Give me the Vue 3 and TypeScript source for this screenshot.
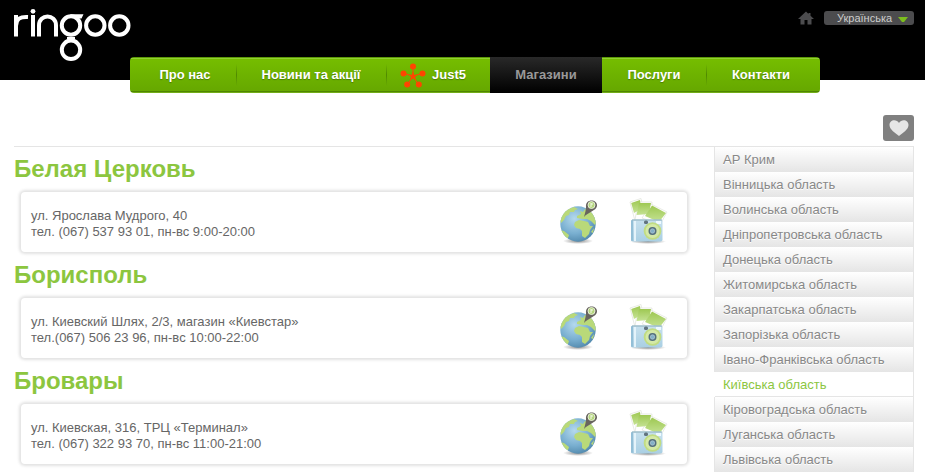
<script setup lang="ts">
import { ref } from 'vue'

interface Shop {
  city: string
  address: string
  contact: string
}

interface MenuItem {
  label: string
  star?: boolean
}

const menu: MenuItem[] = [
  { label: 'Про нас' },
  { label: 'Новини та акції' },
  { label: 'Just5', star: true },
  { label: 'Магазини' },
  { label: 'Послуги' },
  { label: 'Контакти' },
]

const shops: Shop[] = [
  { city: 'Белая Церковь', address: 'ул. Ярослава Мудрого, 40', contact: 'тел. (067) 537 93 01, пн-вс 9:00-20:00' },
  { city: 'Борисполь', address: 'ул. Киевский Шлях, 2/3, магазин «Киевстар»', contact: 'тел.(067) 506 23 96, пн-вс 10:00-22:00' },
  { city: 'Бровары', address: 'ул. Киевская, 316, ТРЦ «Терминал»', contact: 'тел. (067) 322 93 70, пн-вс 11:00-21:00' },
]

const regions: string[] = [
  'АР Крим',
  'Вінницька область',
  'Волинська область',
  'Дніпропетровська область',
  'Донецька область',
  'Житомирська область',
  'Закарпатська область',
  'Запорізька область',
  'Івано-Франківська область',
  'Київська область',
  'Кіровоградська область',
  'Луганська область',
  'Львівська область',
]

const activeMenu = ref('Магазини')
const activeRegion = ref('Київська область')
const language = ref('uk')
</script>

<template>
  <div class="page">
    <header class="header">
      <div class="top">
        <a class="logo" href="#" aria-label="ringoo">
          <svg width="118" height="54" viewBox="14 8 118 54" fill="none" stroke="#fff" stroke-width="4">
            <path d="M16 36.500V15M16 26C16 19 20 16.500 28 17" />
            <path d="M33 15V36.500" />
            <circle cx="33" cy="11.300" r="2.400" fill="#fff" stroke="none" />
            <path d="M39 36.500V25.500C39 13.500 56 13.500 56 25.500V36.500" />
            <circle cx="71" cy="25.500" r="9.200" />
            <path d="M70 14.300H83.500L81.500 18.500H74Z" fill="#fff" stroke="none" />
            <path d="M67 38H75" stroke-width="2" />
            <circle cx="71" cy="49.800" r="9.200" />
            <circle cx="95.300" cy="25.500" r="9.200" />
            <circle cx="119.300" cy="25.500" r="9.200" />
          </svg>
        </a>
        <div class="tools">
          <a class="home" href="#" aria-label="Головна">
            <svg width="16" height="14" viewBox="0 0 16 14" fill="#4c4c4e">
              <path d="M8 0.500 10.500 3V2H12.500V4.800L16 8H13.500V13.500H9.500V9H6.500V13.500H2.500V8H0Z" />
            </svg>
          </a>
          <div class="language">
            <select v-model="language" aria-label="Мова">
              <option value="uk">Українська</option>
            </select>
            <svg class="arrow" width="10" height="5" viewBox="0 0 10 5" aria-hidden="true">
              <path d="M0 0H10L6 5H4Z" fill="#7cbd1e" />
            </svg>
          </div>
        </div>
      </div>
      <nav class="menu">
        <a
          v-for="item in menu"
          :key="item.label"
          href="#"
          :class="{ active: item.label === activeMenu, starred: item.star }"
          @click.prevent="activeMenu = item.label"
        >
          <svg v-if="item.star" class="star" width="26" height="26" viewBox="0 0 26 26" fill="#ff4500" aria-hidden="true">
            <path d="M13 13V4M13 13 4 10.500M13 13 22 10.500M13 13 7.500 21.500M13 13 18.500 21.500" stroke="#ff4500" stroke-width="1" />
            <path d="M13 8.500 14.300 11.700 17.300 11.900 15 14 16 17.300 13 15.500 10 17.300 11 14 8.700 11.900 11.700 11.700Z" />
            <circle cx="13" cy="3.500" r="3" />
            <circle cx="3.500" cy="10.500" r="3" />
            <circle cx="22.500" cy="10.500" r="3" />
            <circle cx="7.200" cy="21.500" r="3" />
            <circle cx="18.800" cy="21.500" r="3" />
          </svg>
          <span>{{ item.label }}</span>
        </a>
      </nav>
    </header>

    <div class="actions">
      <button class="favourite" type="button" aria-label="До обраного">
        <svg width="20" height="16" viewBox="0 0 20 16" fill="#e6e6e6">
          <path d="M10 16C6 12.500 0.500 9.500 0.500 5C0.500 -0.500 7.500 -1.500 10 3C12.500 -1.500 19.500 -0.500 19.500 5C19.500 9.500 14 12.500 10 16Z" />
        </svg>
      </button>
    </div>

    <div class="columns">
      <main>
        <section v-for="shop in shops" :key="shop.city">
          <h2>{{ shop.city }}</h2>
          <div class="card">
            <p>{{ shop.address }}<br />{{ shop.contact }}</p>
            <a href="#" aria-label="На карті">
              <svg width="40" height="48" viewBox="0 0 40 48">
                <defs>
                  <radialGradient id="sea" cx="0.4" cy="0.35" r="0.7">
                    <stop offset="0" stop-color="#b4d9ed" />
                    <stop offset="0.600" stop-color="#79afd0" />
                    <stop offset="1" stop-color="#5087ab" />
                  </radialGradient>
                  <radialGradient id="shade">
                    <stop offset="0" stop-color="#888" />
                    <stop offset="1" stop-color="#888" stop-opacity="0" />
                  </radialGradient>
                  <clipPath id="globe"><circle cx="19" cy="26" r="17.700" /></clipPath>
                </defs>
                <ellipse cx="19" cy="43" rx="15" ry="3" fill="url(#shade)" />
                <circle cx="19" cy="26" r="17.700" fill="url(#sea)" />
                <g clip-path="url(#globe)" fill="#b9d979">
                  <path d="M1 22 4 15 9 11 15 9 19 11 16 12 15 14 11 14 10 17 7 18 5 22 2 25Z" />
                  <path d="M1 32 5 33 10 37 9 40 6 41 1 36Z" />
                  <path d="M18 18 22 16 21 13 24 14 26 11 34 15 38 24 36 27 32 23 28 21 24 21 18 20Z" />
                  <path d="M16 24 20 22 25 23 29 24 31 28 34 28 31 32 30 36 26 40 23 38 23 33 21 31 17 30 15 27Z" />
                  <path d="M32 34 35 30 34 35Z" />
                </g>
                <path d="M25 19C26 15 27 12 27 9C26 0 39 1 38 8C37 13 29 14 25 19Z" fill="#68645f" />
                <circle cx="32.500" cy="7" r="3.500" fill="#b5d67e" stroke="#edf5df" stroke-width="0.900" />
                <path d="M32 5V9M32 6H34" stroke="#f5faeb" stroke-width="1" />
              </svg>
            </a>
            <a href="#" aria-label="Фотографії">
              <svg width="40" height="48" viewBox="0 0 40 48">
                <defs>
                  <linearGradient id="photo" x2="0" y2="1">
                    <stop stop-color="#9ec852" />
                    <stop offset="1" stop-color="#c5e294" />
                  </linearGradient>
                  <linearGradient id="body" x2="0" y2="1">
                    <stop stop-color="#c8e1ee" />
                    <stop offset="1" stop-color="#a9cfe3" />
                  </linearGradient>
                </defs>
                <ellipse cx="19" cy="43.500" rx="18" ry="2.500" fill="url(#shade)" />
                <g fill="#fff" stroke="#dfe3da" stroke-width="0.700">
                  <path d="M1 4 12 0.500 16 19 6 23Z" />
                  <path d="M9 4 23 4 22 23 6 22Z" />
                  <path d="M22 6 38 14 31 27 13 20Z" />
                </g>
                <path d="M2.200 5 11 2 12 11 5 15Z" fill="url(#photo)" />
                <path d="M10 5 22 5 20 16 7.500 17Z" fill="url(#photo)" />
                <path d="M23 7.500 37 15 30 24 16 18Z" fill="url(#photo)" />
                <rect x="2" y="21.500" width="31.500" height="22" rx="2" fill="url(#body)" />
                <rect x="2" y="22" width="2" height="21" rx="1" fill="#93bfd7" />
                <rect x="5" y="23" width="2" height="20" fill="#e4f3fa" />
                <path d="M3 22H33" stroke="#8baebb" />
                <rect x="15" y="22.500" width="4" height="3.500" rx="1.500" fill="#61737e" />
                <rect x="27" y="23" width="5" height="3" fill="#eef9ff" />
                <circle cx="23.500" cy="33" r="8.800" fill="#c1dc82" />
                <circle cx="23.500" cy="33" r="7" fill="#d4e9a7" />
                <circle cx="23.500" cy="33" r="4" fill="#526e7c" />
                <circle cx="23.500" cy="33" r="2.200" fill="#83b0c7" stroke="#b1cad5" stroke-width="0.700" />
              </svg>
            </a>
          </div>
        </section>
      </main>
      <aside>
        <ul>
          <li v-for="region in regions" :key="region">
            <a
              href="#"
              :class="{ active: region === activeRegion }"
              @click.prevent="activeRegion = region"
            >{{ region }}</a>
          </li>
        </ul>
      </aside>
    </div>
  </div>
</template>

<style>
body {
  background: #fff;
}
</style>

<style scoped>
.page {
  font-family: "Liberation Sans", Arial, sans-serif;
  font-size: 13px;
  line-height: 16px;
  color: #666;
}

a {
  text-decoration: none;
}

svg {
  display: block;
}

.header {
  height: 80px;
  background: #000;
}

.top {
  display: flex;
  justify-content: space-between;
  align-items: flex-start;
  height: 57px;
  padding: 0 11px 0 14px;
}

.logo {
  padding-top: 8px;
}

.tools {
  display: flex;
  align-items: center;
  gap: 10px;
  padding-top: 11px;
}

.language {
  position: relative;
}

.language select {
  display: block;
  appearance: none;
  width: 90px;
  height: 14px;
  padding: 0 20px 0 13px;
  border: 0;
  border-radius: 3px;
  background: #4c4c4e;
  color: #ccc;
  font: 11px/14px "Liberation Sans", Arial, sans-serif;
}

.arrow {
  position: absolute;
  top: 6px;
  right: 6px;
  pointer-events: none;
}

.menu {
  display: grid;
  grid-template-columns: 106fr 150fr 104fr 112fr 104fr 114fr;
  height: 36px;
  margin: 0 105px 0 130px;
  overflow: hidden;
  border-radius: 4px;
  background: linear-gradient(#5c9a06 0 1px, #91cf32 1px 2px, #75bd00 2px, #66a800 34px, #4f8600 34px 35px, #72ad18 35px);
}

.menu a {
  display: flex;
  justify-content: center;
  align-items: center;
  gap: 6px;
  color: #fff;
  font-weight: bold;
  text-shadow: 0 1px 1px #4b7d00;
  white-space: nowrap;
}

.menu a + a {
  background: linear-gradient(transparent, #4f8900, transparent) 0 50% / 1px 22px no-repeat;
}

.menu a.active {
  background: linear-gradient(#292929, #000);
  color: #999;
  text-shadow: none;
}

.menu a.active + a {
  background: none;
}

.menu a:first-child {
  padding-left: 4px;
}

.menu a:last-child {
  padding-right: 4px;
}

.menu a.starred {
  justify-content: flex-start;
  padding-left: 14px;
}

.star {
  margin-top: 2px;
}

.actions {
  display: flex;
  justify-content: flex-end;
  margin: 0 11px 0 14px;
  padding: 35px 0 5px;
  border-bottom: 1px solid #e5e5e5;
}

.favourite {
  display: grid;
  place-items: center;
  width: 31px;
  height: 26px;
  padding: 0;
  border: 0;
  border-radius: 3px;
  background: #808080;
}

.columns {
  display: grid;
  grid-template-columns: 1fr 200px;
  gap: 27px;
  padding: 0 11px 0 14px;
}

main {
  padding-top: 8px;
}

h2 {
  margin: 0;
  color: #8cc63f;
  font-size: 24px;
  line-height: 28px;
}

.card {
  display: flex;
  align-items: center;
  gap: 30px;
  height: 60px;
  margin: 9px 0 9px 7px;
  padding: 0 18px 0 10px;
  border-radius: 4px;
  box-shadow: 0 0 3px 2px #e2e2e2;
}

.card p {
  flex: 1;
  margin: 3px 0 0;
}

ul {
  margin: 0;
  padding: 0;
  list-style: none;
}

aside a {
  display: block;
  padding: 0 8px;
  border: solid #e5e5e5;
  border-width: 0 1px;
  background: linear-gradient(#fff, #e5e5e5);
  color: #888;
  line-height: 25px;
  text-shadow: 0 1px 0 #fff;
}

aside a.active {
  border-left-color: #fff;
  background: linear-gradient(#e5e5e5, #e5e5e5) 0 100% / 100% 1px no-repeat;
  color: #8cc63f;
}
</style>
